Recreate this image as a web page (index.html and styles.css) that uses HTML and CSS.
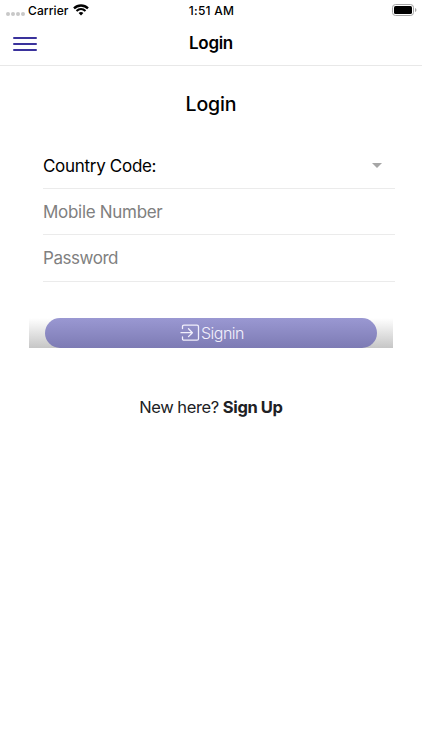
FILE: index.html
```html
<!DOCTYPE html>
<html lang="en">
<head>
<meta charset="utf-8">
<title>Login</title>
<link rel="stylesheet" href="styles.css">
</head>
<body>
<div class="status">
  <div class="carrier">
    <span class="signal"><i></i><i></i><i></i><i></i></span>
    <span class="carrier-name">Carrier</span>
    <svg class="wifi" width="16" height="12" viewBox="0 0 16 12" fill="none" stroke="#000"><path d="M1 4.4C5 .5 11 .5 15 4.4" stroke-width="2.3"/><path d="M3.5 6.9C6.2 4.4 9.8 4.4 12.5 6.9" stroke-width="2.1"/><path d="M8 11.4 5.6 9C7 7.8 9 7.8 10.4 9Z" fill="#000" stroke="none"/></svg>
  </div>
  <time class="time">1:51 AM</time>
  <svg class="battery" width="25" height="12" viewBox="0 0 25 12"><rect x=".5" y=".5" width="21" height="11" rx="3" fill="#fff" stroke="#a5a5a5"/><rect x="2" y="2" width="18" height="8" rx="1.6"/><path d="M23 4v4q1.5-.6 1.5-2T23 4Z" fill="#a5a5a5"/></svg>
</div>
<header class="bar">
  <button class="menu" aria-label="Menu"><i></i><i></i><i></i></button>
  <span class="bar-title">Login</span>
</header>
<main>
  <h1 class="title">Login</h1>
  <form class="fields">
    <div class="field country"><span>Country Code:</span><svg class="caret" width="10" height="5" viewBox="0 0 10 5"><path d="M0 0h10L5 5Z" fill="#a6a6a6"/></svg></div>
    <div class="field"><span>Mobile Number</span></div>
    <div class="field password"><span>Password</span></div>
  </form>
  <div class="action">
    <button class="signin"><svg width="20" height="18" viewBox="0 0 20 18" fill="none" stroke="#f2f0fc" stroke-width="1.3" stroke-linecap="round" stroke-linejoin="round"><path d="M2.5 4.5V2.7q0-1.5 1.5-1.5h13q1.5 0 1.5 1.5v12q0 1.5-1.5 1.5H4q-1.5 0-1.5-1.5V13M1 8.7h11.3M8.5 4.8l3.9 3.9-3.9 3.9"/></svg><span>Signin</span></button>
  </div>
  <p class="signup"><span>New here?</span> <b>Sign Up</b></p>
</main>
</body>
</html>
```
FILE: styles.css
```css
* { box-sizing: border-box; }
body { margin: 0; height: 750px; background: #fff; color: #000; font-family: Inter, "Liberation Sans", sans-serif; overflow: hidden; }
button { border: 0; padding: 0; background: none; font: inherit; }
.status { height: 20px; display: grid; grid-template-columns: 1fr auto 1fr; align-items: center; padding: 0 5px 0 6px; font-size: 12px; line-height: 19px; font-weight: 500; }
.carrier { display: flex; align-items: center; }
.signal { display: flex; gap: 1px; width: 22px; padding-top: 7px; }
.signal i { width: 4px; height: 4px; border-radius: 2px; background: #c8c8c8; }
.carrier-name { width: 45px; white-space: nowrap; letter-spacing: .1px; padding-top: 1px; }
.time { letter-spacing: .25px; padding-top: 1px; }
.battery { justify-self: end; }
.bar { height: 46px; border-bottom: 1px solid #e8e8e8; display: grid; grid-template-columns: 1fr auto 1fr; align-items: center; padding: 0 13px; }
.menu { width: 24px; height: 14px; display: flex; flex-direction: column; justify-content: space-between; margin-top: 1px; }
.menu i { height: 2px; width: 24px; border-radius: 1px; background: #3a329c; }
.bar-title { font-size: 17px; font-weight: 600; line-height: 46px; letter-spacing: -.3px; }
.title { margin: 25px 0 0; text-align: center; font-size: 19.5px; line-height: 26px; font-weight: 500; letter-spacing: -.15px; }
.fields { margin: 25px 27px 0 43px; }
.field { height: 46px; border-bottom: 1px solid #ebebeb; display: flex; align-items: center; color: #808080; font-size: 17px; letter-spacing: -.3px; }
.country { height: 47px; color: #000; justify-content: space-between; padding-right: 13px; }
.country span { padding-top: 2px; }
.password { height: 47px; letter-spacing: -.45px; padding-bottom: 1px; }
.action { margin: 36px 29px 0; height: 30px; padding: 0 16px; background: linear-gradient(#fff, #c6c6c6); }
.signin { width: 100%; height: 30px; border-radius: 15px; background: linear-gradient(#9a98d2, #7d7bb4); color: #f2f0fc; display: flex; align-items: center; justify-content: center; gap: 1px; font-size: 16px; font-weight: 300; letter-spacing: -.5px; padding-left: 2px; }
.signup { margin: 47px 0 0; text-align: center; font-size: 16.5px; line-height: 24px; color: #202124; letter-spacing: -.35px; word-spacing: -.5px; }
.signup b { font-weight: 700; letter-spacing: -.25px; }
```
